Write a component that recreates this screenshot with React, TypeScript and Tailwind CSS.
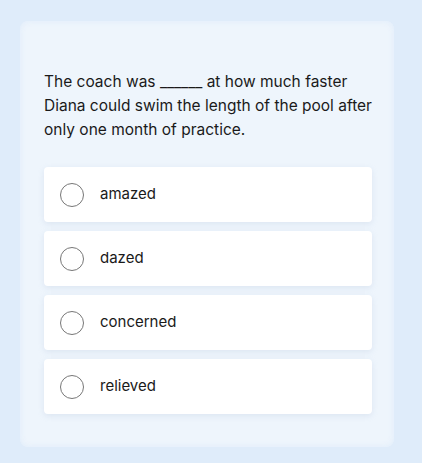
import React from "react";

const options = ["amazed", "dazed", "concerned", "relieved"];

export default function App() {
  return (
    <div
      className="w-[422px] h-[463px] bg-[#dfecfa] pt-[21px] pl-[20px]"
      style={{ fontFamily: "Inter, 'Noto Sans', sans-serif" }}
    >
      <div className="w-[374px] h-[426px] rounded-[8px] bg-[#eef5fc] shadow-[inset_0_0_6px_rgba(220,234,250,0.8)] pl-[24px] pt-[49px]">
        <p className="w-[336px] text-[15.5px] leading-[24px] text-[#1a1a1a]">
          The coach was ______ at how much faster Diana could swim the length of the pool after only one month of practice.
        </p>
        <div className="mt-[25px] flex flex-col gap-[9px]">
          {options.map((o) => (
            <div
              key={o}
              className="h-[55px] w-[328px] rounded-[4px] bg-white shadow-[0_2px_6px_rgba(150,170,200,0.2)] flex items-center pl-[16px]"
            >
              <span className="w-[24px] h-[24px] rounded-full border border-[#777] bg-white" />
              <span className="ml-[16px] text-[15px] text-[#1a1a1a]">{o}</span>
            </div>
          ))}
        </div>
      </div>
    </div>
  );
}
